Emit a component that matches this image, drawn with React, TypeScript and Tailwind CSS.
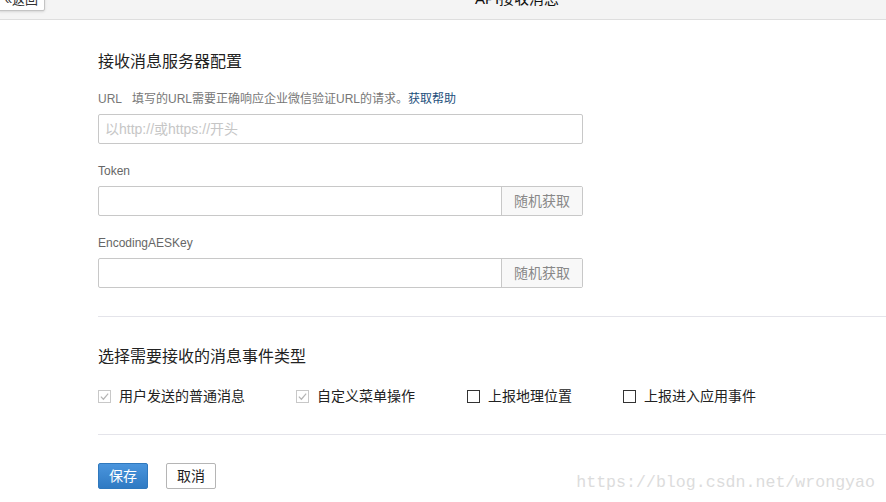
import React from "react";

const font = { fontFamily: '"Liberation Sans", "Noto Sans CJK SC", sans-serif' };

function KeyField({ label }: { label: string }) {
  return (
    <>
      <div className="mt-[17px] text-[12px] leading-[20px] text-[#666]">{label}</div>
      <div className="mt-[5px] flex h-[30px] w-[485px] rounded-[2px] border border-[#c8c8c8] bg-white">
        <input className="min-w-0 flex-1 bg-transparent px-[6px] text-[14px] outline-none" />
        <button className="w-[81px] border-l border-[#c8c8c8] bg-[#f8f8f8] text-[14px] text-[#888]">
          随机获取
        </button>
      </div>
    </>
  );
}

function Check({ label, checked }: { label: string; checked?: boolean }) {
  return (
    <label className="flex items-center gap-[8px]">
      {checked ? (
        <span className="flex h-[13px] w-[13px] items-center justify-center border border-[#c8c8c8] bg-white">
          <svg viewBox="0 0 12 12" className="h-[11px] w-[11px]" fill="none" stroke="#b5b5b5" strokeWidth="1.3">
            <path d="M2 6.2 L4.8 9 L10 2.8" />
          </svg>
        </span>
      ) : (
        <span className="h-[13px] w-[13px] border border-[#333] bg-white" />
      )}
      <span className="text-[14px] leading-[20px] text-[#222]">{label}</span>
    </label>
  );
}

export default function App() {
  return (
    <div className="relative h-[502px] w-[886px] overflow-hidden bg-white text-[#222]" style={font}>
      {/* top bar, scrolled partly out of view */}
      <div className="relative h-[20px] overflow-hidden border-b border-[#dedede] bg-[#f4f4f4]">
        <button className="absolute left-[-2px] top-[-17px] h-[28px] w-[47px] rounded-[2px] border border-[#c4c4c4] bg-white text-[13px] leading-[32px] text-[#333] shadow-sm">
          «返回
        </button>
        <div className="absolute left-[148px] right-0 top-[-9px] text-center text-[15px] leading-[16px] text-[#111]">
          API接收消息
        </div>
      </div>

      <div className="pl-[98px]">
        <h2 className="mt-[30px] text-[16px] leading-[24px] text-[#222]">接收消息服务器配置</h2>

        <div className="mt-[15px] text-[12px] leading-[20px] text-[#777]">
          URL&nbsp;&nbsp;&nbsp;填写的URL需要正确响应企业微信验证URL的请求。
          <a className="text-[#1d4f7c]">获取帮助</a>
        </div>
        <input
          className="mt-[5px] block h-[30px] w-[485px] rounded-[2px] border border-[#c8c8c8] px-[6px] text-[14px] outline-none placeholder:text-[#c6c6c6]"
          placeholder="以http://或https://开头"
        />

        <KeyField label="Token" />
        <KeyField label="EncodingAESKey" />

        <div className="mt-[28px] h-px bg-[#e4e4ea]" />

        <h2 className="mt-[28px] text-[16px] leading-[24px] text-[#222]">选择需要接收的消息事件类型</h2>

        <div className="mt-[17px] flex items-center">
          <div className="w-[198px]">
            <Check label="用户发送的普通消息" checked />
          </div>
          <div className="w-[171px]">
            <Check label="自定义菜单操作" checked />
          </div>
          <div className="w-[156px]">
            <Check label="上报地理位置" />
          </div>
          <Check label="上报进入应用事件" />
        </div>

        <div className="mt-[28px] h-px bg-[#e4e4ea]" />

        <div className="mt-[28px] flex gap-[18px]">
          <button className="h-[26px] w-[50px] rounded-[2px] border border-[#2f78bd] bg-gradient-to-b from-[#4a95dd] to-[#2f7ac3] text-[14px] text-white">
            保存
          </button>
          <button className="h-[26px] w-[50px] rounded-[2px] border border-[#b5b5b5] bg-white text-[14px] text-[#222]">
            取消
          </button>
        </div>
      </div>

      <div
        className="absolute bottom-[9px] right-[11px] text-[16.6px] leading-[20px] text-[#dcdcdc]"
        style={{ fontFamily: '"Liberation Mono", monospace' }}
      >
        https://blog.csdn.net/wrongyao
      </div>
    </div>
  );
}
